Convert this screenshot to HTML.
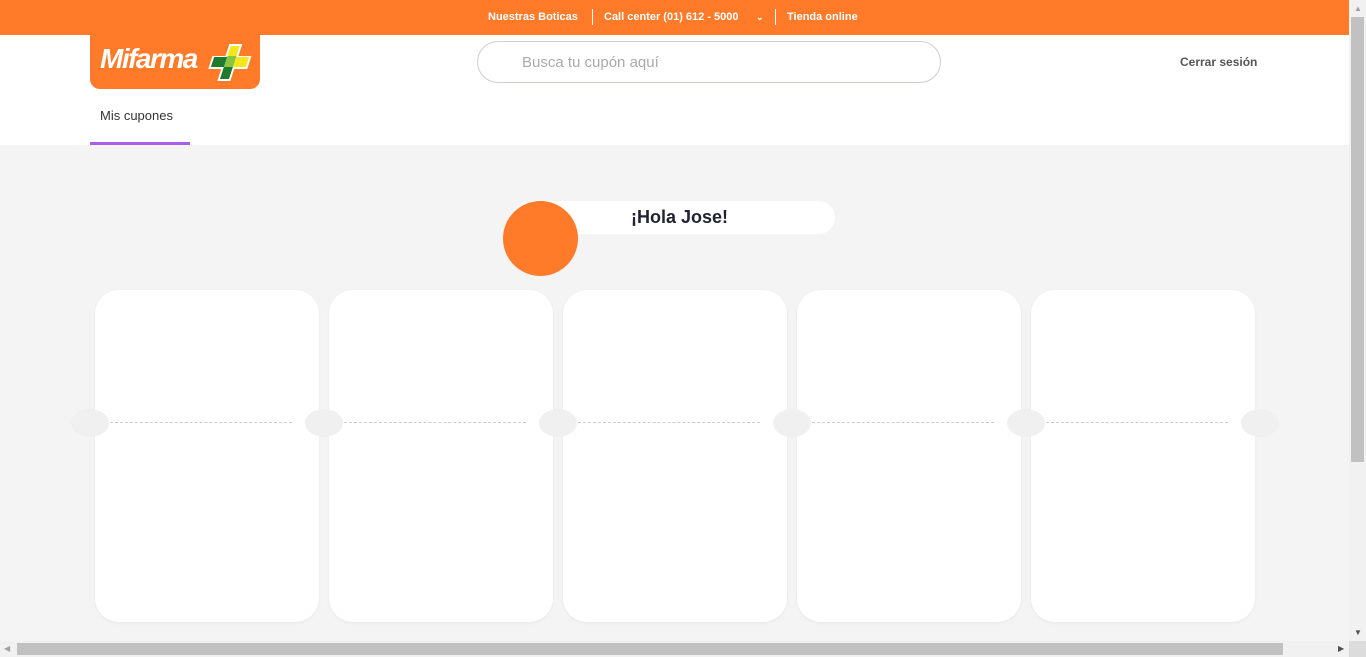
<!DOCTYPE html>
<html><head><meta charset="utf-8"><style>
*{margin:0;padding:0;box-sizing:border-box}
body{width:1366px;height:657px;overflow:hidden;background:#f4f4f4;font-family:"Liberation Sans",sans-serif;position:relative}
.top{position:absolute;left:0;top:0;width:1349px;height:35px;background:#ff7a29;color:#fff;font-size:11px;font-weight:bold}
.top span{position:absolute;top:11px}
.sep{position:absolute;top:9px;width:1px;height:16px;background:#fff}
.hdr{position:absolute;left:0;top:35px;width:1349px;height:110px;background:#fff}
.logo{position:absolute;left:90px;top:35px;width:170px;height:54px;background:#ff7a29;border-radius:0 0 10px 10px}
.search{position:absolute;left:477px;top:41px;width:464px;height:42px;border:1px solid #ccd;border-radius:21px;color:#aaa;font-size:15px;padding:12px 0 0 44px}
.card{position:absolute;top:290px;width:224px;height:332px;background:#fff;border-radius:24px;box-shadow:0 1px 3px rgba(0,0,0,.06)}
.dash{position:absolute;top:422px;height:0;border-top:1px dashed #c8ccd4}
.notch{position:absolute;top:409px;width:38px;height:28px;border-radius:50%;background:#f0f0f0}
</style></head><body>
<div class="top">
<span style="left:488px">Nuestras Boticas</span><div class="sep" style="left:592px"></div>
<span style="left:604px">Call center (01) 612 - 5000</span><span style="left:756px;font-size:9px;top:12px">&#8964;</span><div class="sep" style="left:775px"></div>
<span style="left:787px">Tienda online</span></div>
<div class="hdr">
<div style="position:absolute;left:100px;top:73px;font-size:13px;color:#333">Mis cupones</div>
<div style="position:absolute;left:90px;top:107px;width:100px;height:3px;background:#a65fe8"></div>
<div style="position:absolute;left:1180px;top:20px;font-size:12px;font-weight:bold;color:#555">Cerrar sesión</div>
</div>
<div class="logo">
<div style="position:absolute;left:10px;top:8px;color:#fff;font-size:28px;font-weight:bold;font-style:italic;letter-spacing:-1.5px">Mifarma</div>
<svg style="position:absolute;left:116px;top:7px" width="50" height="40" viewBox="0 0 50 40"><g transform="translate(6,0) skewX(-18)"><path d="M18 2h13v12h13v13H31v12H18V27H5V14h13z" fill="#fff"/><rect x="20" y="4" width="9" height="10" fill="#f5e61c"/><rect x="29" y="15" width="13" height="10" fill="#f5e61c"/><rect x="20" y="14" width="9" height="11" fill="#8bc53f"/><rect x="7" y="15" width="13" height="10" fill="#1e7a2e"/><rect x="20" y="25" width="9" height="12" fill="#1e7a2e"/></g></svg>
</div>
<div class="search">Busca tu cupón aquí</div>
<div style="position:absolute;left:515px;top:201px;width:320px;height:33px;background:#fff;border-radius:17px"></div>
<div style="position:absolute;left:503px;top:201px;width:75px;height:75px;border-radius:50%;background:#ff7a29"></div>
<div style="position:absolute;left:631px;top:207px;font-size:18px;font-weight:bold;color:#223">¡Hola Jose!</div>
<div class="card" style="left:95px"></div><div class="card" style="left:329px"></div><div class="card" style="left:563px"></div><div class="card" style="left:797px"></div><div class="card" style="left:1031px"></div>
<div class="dash" style="left:110px;width:182px"></div><div class="dash" style="left:344px;width:182px"></div><div class="dash" style="left:578px;width:182px"></div><div class="dash" style="left:812px;width:182px"></div><div class="dash" style="left:1046px;width:182px"></div>
<div class="notch" style="left:71px"></div><div class="notch" style="left:305px"></div><div class="notch" style="left:539px"></div><div class="notch" style="left:773px"></div><div class="notch" style="left:1007px"></div><div class="notch" style="left:1241px"></div>
<div style="position:absolute;left:1349px;top:0;width:17px;height:641px;background:#f1f1f1"></div>
<div style="position:absolute;left:1351px;top:17px;width:13px;height:445px;background:#c1c1c1"></div>
<div style="position:absolute;left:0;top:641px;width:1349px;height:16px;background:#f1f1f1"></div>
<div style="position:absolute;left:17px;top:643px;width:1266px;height:12px;background:#c1c1c1"></div>
<div style="position:absolute;left:1349px;top:641px;width:17px;height:16px;background:#dcdcdc"></div>
<div style="position:absolute;left:1354px;top:628px;font-size:8px;color:#505050">▼</div>
<div style="position:absolute;left:1338px;top:644px;font-size:8px;color:#505050">▶</div>
<div style="position:absolute;left:4px;top:644px;font-size:8px;color:#a0a0a0">◀</div>
<div style="position:absolute;left:1354px;top:4px;font-size:8px;color:#a0a0a0">▲</div>
</body></html>
